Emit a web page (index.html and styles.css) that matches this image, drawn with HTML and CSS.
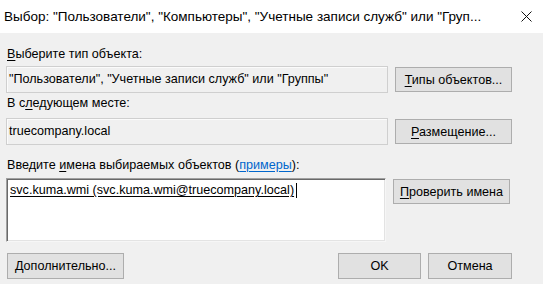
FILE: index.html
```
<!DOCTYPE html>
<html lang="ru">
<head>
	<meta charset="utf-8">
	<title>Выбор объектов</title>
	<link rel="stylesheet" href="styles.css">
</head>
<body>
	<div class="titlebar">
		<span class="title">Выбор: "Пользователи", "Компьютеры", "Учетные записи служб" или "Груп...</span>
		<span class="close">
			<svg width="11" height="11" viewBox="0 0 11 11"><path d="M0.5 0.5L10.5 10.5M10.5 0.5L0.5 10.5" stroke="#111" stroke-width="1"/></svg>
		</span>
	</div>

	<div class="dialog">
		<div class="label label-first"><u>В</u>ыберите тип объекта:</div>
		<div class="row">
			<div class="field">"Пользователи", "Учетные записи служб" или "Группы"</div>
			<button class="btn btn-side" type="button"><u>Т</u>ипы объектов...</button>
		</div>

		<div class="label label-second">В с<u>л</u>едующем месте:</div>
		<div class="row">
			<div class="field">truecompany.local</div>
			<button class="btn btn-side" type="button"><u>Р</u>азмещение...</button>
		</div>

		<div class="label label-third">Введите <u>и</u>мена выбираемых объектов (<a href="#" class="link">примеры</a>):</div>
		<div class="row row-top">
			<div class="names"><span class="resolved">svc.kuma.wmi (svc.kuma.wmi@truecompany.local)</span><span class="caret"></span></div>
			<button class="btn btn-side btn-check" type="button"><u>П</u>роверить имена</button>
		</div>

		<div class="footer">
			<button class="btn btn-more" type="button"><u>Д</u>ополнительно...</button>
			<button class="btn btn-ok" type="button">OK</button>
			<button class="btn btn-cancel" type="button">Отмена</button>
		</div>
	</div>
</body>
</html>
```

FILE: styles.css
```
body {
	margin: 0;
	width: 543px;
	height: 284px;
	overflow: hidden;
	background-color: #f0f0f0;
	font-family: "Liberation Sans", Arial, sans-serif;
	font-size: 12.6px;
	color: #000;
}

u {
	text-decoration-thickness: 1px;
	text-underline-offset: 2px;
}

/* Window title */
.titlebar {
	height: 33px;
	background-color: #fff;
	display: flex;
	align-items: center;
	justify-content: space-between;
	padding: 0 11px 0 4px;
}

.title {
	font-size: 13.5px;
	white-space: nowrap;
}

.close {
	display: flex;
	width: 11px;
	height: 11px;
}

/* Dialog body */
.dialog {
	padding: 0 31px 0 6px;
}

.label {
	line-height: 15px;
	height: 15px;
	padding-left: 1px;
	white-space: nowrap;
}

.label-first {
	margin-top: 14px;
	margin-bottom: 4px;
}

.label-second {
	margin-top: 3px;
	margin-bottom: 7px;
}

.label-third {
	margin-top: 13px;
	margin-bottom: 5px;
}

.link {
	color: #0066cc;
	text-decoration: underline;
	text-underline-offset: 2px;
}

.row {
	display: flex;
	align-items: center;
	gap: 7px;
}

.row-top {
	align-items: flex-start;
}

.field {
	width: 382px;
	height: 27px;
	box-sizing: border-box;
	border: 1px solid #cfcfcf;
	box-shadow: inset 1px 1px 0 #fbfbfb;
	background-color: #f0f0f0;
	padding: 0 0 0 2px;
	line-height: 25px;
	white-space: nowrap;
	overflow: hidden;
}

.names {
	width: 380px;
	height: 64px;
	box-sizing: border-box;
	background-color: #fff;
	border-top: 1px solid #a0a0a0;
	border-left: 1px solid #a0a0a0;
	border-right: 1px solid #f6f6f6;
	border-bottom: 1px solid #f6f6f6;
	box-shadow: inset 1px 1px 0 #696969, inset -1px -1px 0 #e3e3e3;
	padding: 4px 0 0 3px;
	line-height: 15px;
	white-space: nowrap;
}

.resolved {
	text-decoration: underline;
	text-underline-offset: 2px;
}

.caret {
	display: inline-block;
	width: 1px;
	height: 15px;
	margin-left: 2px;
	vertical-align: top;
	background-color: #000;
}

/* Buttons */
.btn {
	height: 25px;
	box-sizing: border-box;
	border: 1px solid #adadad;
	background-color: #e1e1e1;
	font-family: inherit;
	font-size: 12.6px;
	color: #000;
	padding: 0;
	margin: 0;
	white-space: nowrap;
}

.btn-side {
	width: 117px;
}

.btn-check {
	margin-top: 1px;
}

.footer {
	display: flex;
	gap: 7px;
	margin-top: 11px;
}

.footer .btn {
	height: 26px;
}

.btn-more {
	width: 117px;
	margin-left: 1px;
}

.btn-ok {
	width: 83px;
	margin-left: auto;
}

.btn-cancel {
	width: 84px;
}
```
